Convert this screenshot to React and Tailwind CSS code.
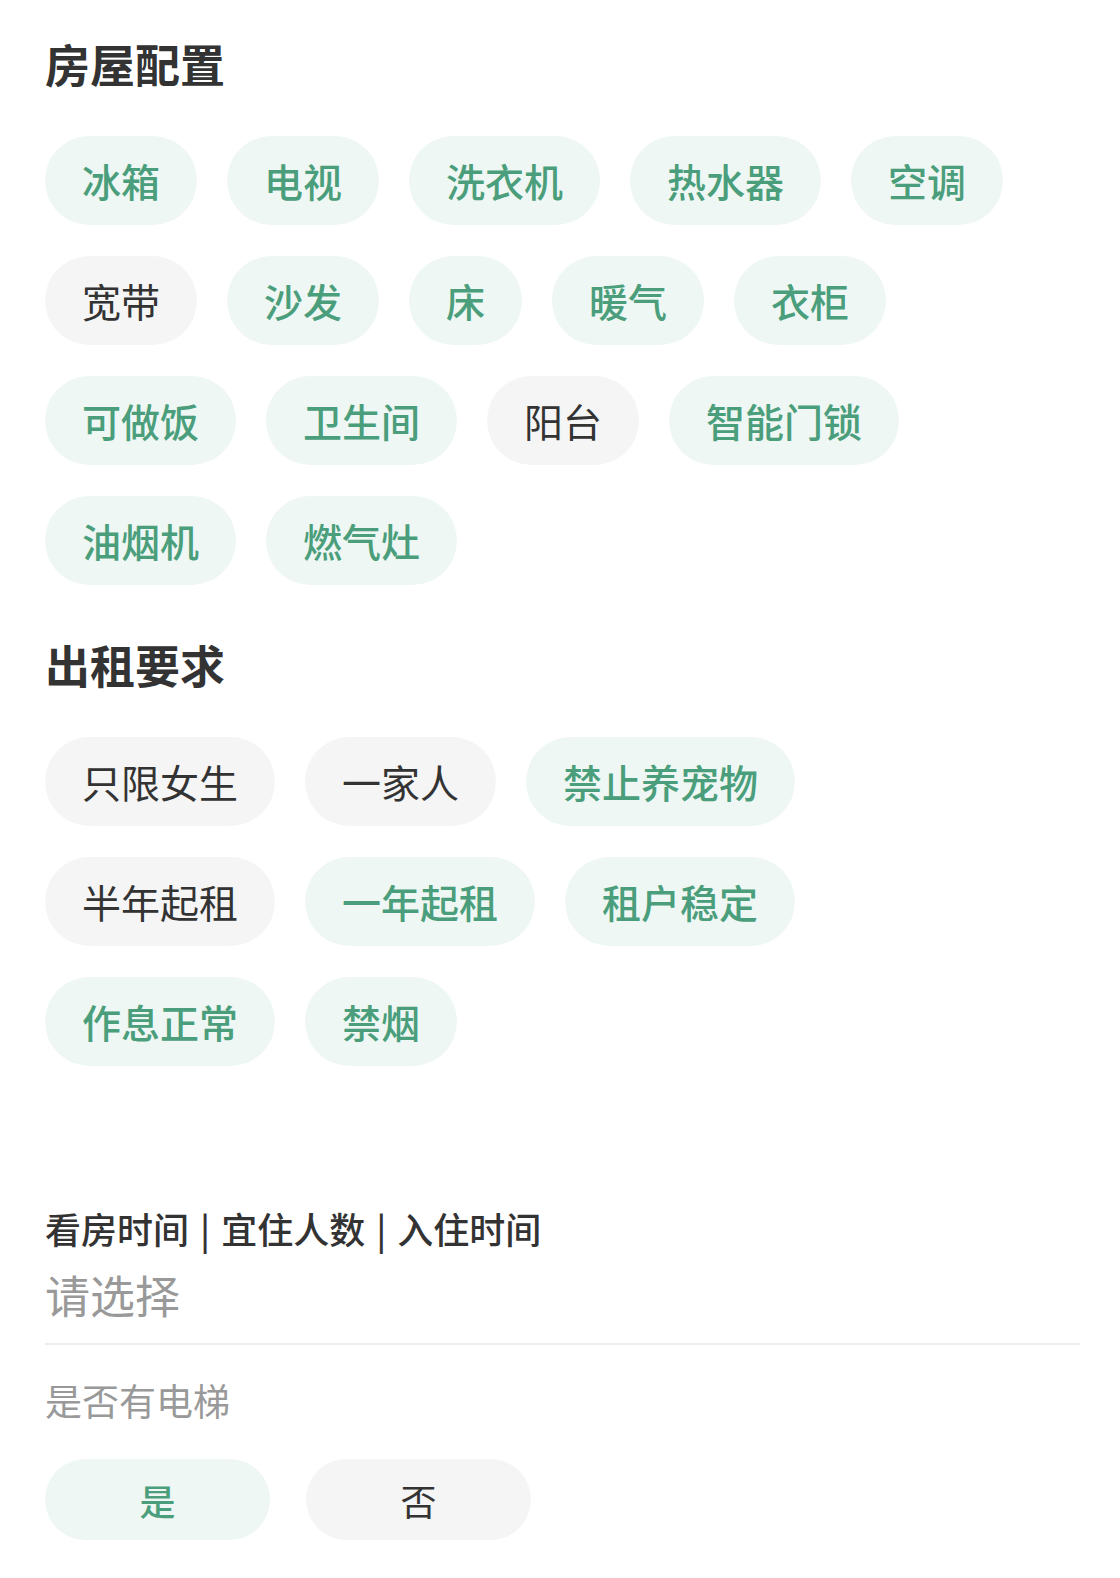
import React from "react";

const facilities = [
    { name: "冰箱", on: true },
    { name: "电视", on: true },
    { name: "洗衣机", on: true },
    { name: "热水器", on: true },
    { name: "空调", on: true },
    { name: "宽带", on: false },
    { name: "沙发", on: true },
    { name: "床", on: true },
    { name: "暖气", on: true },
    { name: "衣柜", on: true },
    { name: "可做饭", on: true },
    { name: "卫生间", on: true },
    { name: "阳台", on: false },
    { name: "智能门锁", on: true },
    { name: "油烟机", on: true },
    { name: "燃气灶", on: true },
];

const requirements = [
    { name: "只限女生", on: false },
    { name: "一家人", on: false },
    { name: "禁止养宠物", on: true },
    { name: "半年起租", on: false },
    { name: "一年起租", on: true },
    { name: "租户稳定", on: true },
    { name: "作息正常", on: true },
    { name: "禁烟", on: true },
];

const font = { fontFamily: '"Noto Sans CJK SC", "Noto Sans", sans-serif' };

function Chip({ name, on }) {
    return (
        <div
            className={
                on
                    ? "flex h-[89px] items-center rounded-full bg-[#eef7f3] px-[37px] text-[39px] font-medium text-[#4b9e7b]"
                    : "flex h-[89px] items-center rounded-full bg-[#f5f5f5] px-[37px] text-[39px] text-[#333333]"
            }
        >
            {name}
        </div>
    );
}

export default function App() {
    return (
        <main className="min-h-screen w-full bg-white pl-[45px] pr-[40px] pt-[34px] pb-[40px]" style={font}>
            <h1 className="text-[45px] font-bold leading-[60px] text-[#333333]">房屋配置</h1>
            <div className="mt-[42px] flex flex-wrap gap-x-[30px] gap-y-[31px] pr-[70px]">
                {facilities.map((f) => (
                    <Chip key={f.name} {...f} />
                ))}
            </div>

            <h1 className="mt-[50px] text-[45px] font-bold leading-[60px] text-[#333333]">出租要求</h1>
            <div className="mt-[42px] flex max-w-[800px] flex-wrap gap-x-[30px] gap-y-[31px]">
                {requirements.map((r) => (
                    <Chip key={r.name} {...r} />
                ))}
            </div>

            <div className="mt-[137px] flex items-center text-[36px] font-medium leading-[50px] text-[#333333]">
                <span>看房时间</span>
                <span className="mx-[11px]">|</span>
                <span>宜住人数</span>
                <span className="mx-[11px]">|</span>
                <span>入住时间</span>
            </div>
            <div className="mt-[12px] text-[45px] leading-[60px] text-[#999999]">请选择</div>
            <div className="mt-[18px] h-[2px] w-full bg-[#ededed]" />

            <div className="mt-[30px] text-[37px] leading-[50px] text-[#999999]">是否有电梯</div>
            <div className="mt-[34px] flex gap-[36px]">
                <button
                    type="button"
                    className="flex h-[81px] w-[225px] items-center justify-center rounded-full bg-[#eef7f3] text-[36px] font-medium text-[#4b9e7b]"
                >
                    是
                </button>
                <button
                    type="button"
                    className="flex h-[81px] w-[225px] items-center justify-center rounded-full bg-[#f5f5f5] text-[36px] text-[#333333]"
                >
                    否
                </button>
            </div>
        </main>
    );
}
